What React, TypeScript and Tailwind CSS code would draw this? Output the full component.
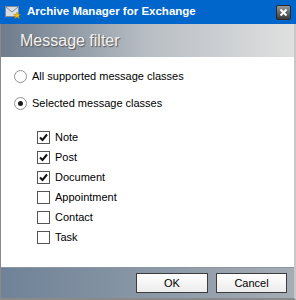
import React from "react";

const items = [
  { label: "Note", checked: true },
  { label: "Post", checked: true },
  { label: "Document", checked: true },
  { label: "Appointment", checked: false },
  { label: "Contact", checked: false },
  { label: "Task", checked: false },
];

function Radio({ on }: { on?: boolean }) {
  return (
    <span className="w-[13px] h-[13px] rounded-full border border-[#8e8f8f] bg-white flex items-center justify-center shrink-0">
      {on && <span className="w-[5px] h-[5px] rounded-full bg-[#1a1a1a]" />}
    </span>
  );
}

function Check({ on }: { on?: boolean }) {
  return (
    <span className="w-[13px] h-[13px] border border-[#555] bg-white flex items-center justify-center shrink-0">
      {on && (
        <svg width="9" height="9" viewBox="0 0 9 9">
          <path d="M1 4.5 L3.5 7 L8 1.5" stroke="#111" strokeWidth="2" fill="none" />
        </svg>
      )}
    </span>
  );
}

function AppIcon() {
  return (
    <svg width="16" height="16" viewBox="0 0 16 16">
      <rect x="0.5" y="2.5" width="13" height="10" fill="#d8dde6" stroke="#7a8aa0" />
      <path d="M1 3 L7 8 L13 3" stroke="#7a8aa0" fill="none" />
      <path d="M12 8 L13 10.5 L15.5 10.5 L13.5 12 L14.3 14.5 L12 13 L9.7 14.5 L10.5 12 L8.5 10.5 L11 10.5 Z" fill="#f5c400" stroke="#b08000" strokeWidth="0.5" />
    </svg>
  );
}

export default function App() {
  return (
    <div className="w-[296px] h-[300px] flex flex-col bg-white" style={{ fontFamily: '"Liberation Sans", Arial, sans-serif' }}>
      <div className="h-[24px] bg-[#0066cc] flex items-center pl-[5px] pr-[5px] shrink-0">
        <AppIcon />
        <span className="ml-[6px] text-white font-bold text-[11.5px]">Archive Manager for Exchange</span>
        <span className="ml-auto w-[15px] h-[15px] rounded-[2px] bg-gradient-to-b from-[#9a9a9a] to-[#3a3a3a] border border-[#2a2a2a] flex items-center justify-center">
          <svg width="9" height="9" viewBox="0 0 9 9">
            <path d="M1.5 1.5 L7.5 7.5 M7.5 1.5 L1.5 7.5" stroke="white" strokeWidth="2" />
          </svg>
        </span>
      </div>
      <div className="flex-1 flex flex-col border-l border-r-2 border-b-2 border-l-[#8a8a8a] border-r-[#c8c8c8] border-b-[#8a8a8a]">
        <div className="h-[33px] bg-gradient-to-r from-[#6e7c8c] via-[#b8bec4] to-[#e0e0e0] flex items-center pl-[19px] shrink-0">
          <span className="text-[16px] text-[#f2f2f2] [text-shadow:1px_1px_1px_#555]">Message filter</span>
        </div>
        <div className="flex-1 flex flex-col text-[11px] text-black pl-[13px] pt-[12px]">
          <div className="flex items-center gap-[5px] h-[14px]">
            <Radio />
            <span>All supported message classes</span>
          </div>
          <div className="flex items-center gap-[5px] h-[14px] mt-[13px]">
            <Radio on />
            <span>Selected message classes</span>
          </div>
          <div className="flex flex-col gap-[6px] pl-[23px] mt-[20px]">
            {items.map((it) => (
              <div key={it.label} className="flex items-center gap-[5px] h-[14px]">
                <Check on={it.checked} />
                <span>{it.label}</span>
              </div>
            ))}
          </div>
        </div>
        <div className="h-[31px] bg-gradient-to-r from-[#6f8297] to-[#a5adb5] border-t border-[#8a96a4] flex items-center justify-end gap-[8px] pr-[7px] shrink-0">
          <button className="w-[72px] h-[20px] bg-gradient-to-b from-white to-[#ececec] border border-[#3c3c3c] text-[11px]">OK</button>
          <button className="w-[71px] h-[20px] bg-gradient-to-b from-white to-[#ececec] border border-[#3c3c3c] text-[11px]">Cancel</button>
        </div>
      </div>
    </div>
  );
}
